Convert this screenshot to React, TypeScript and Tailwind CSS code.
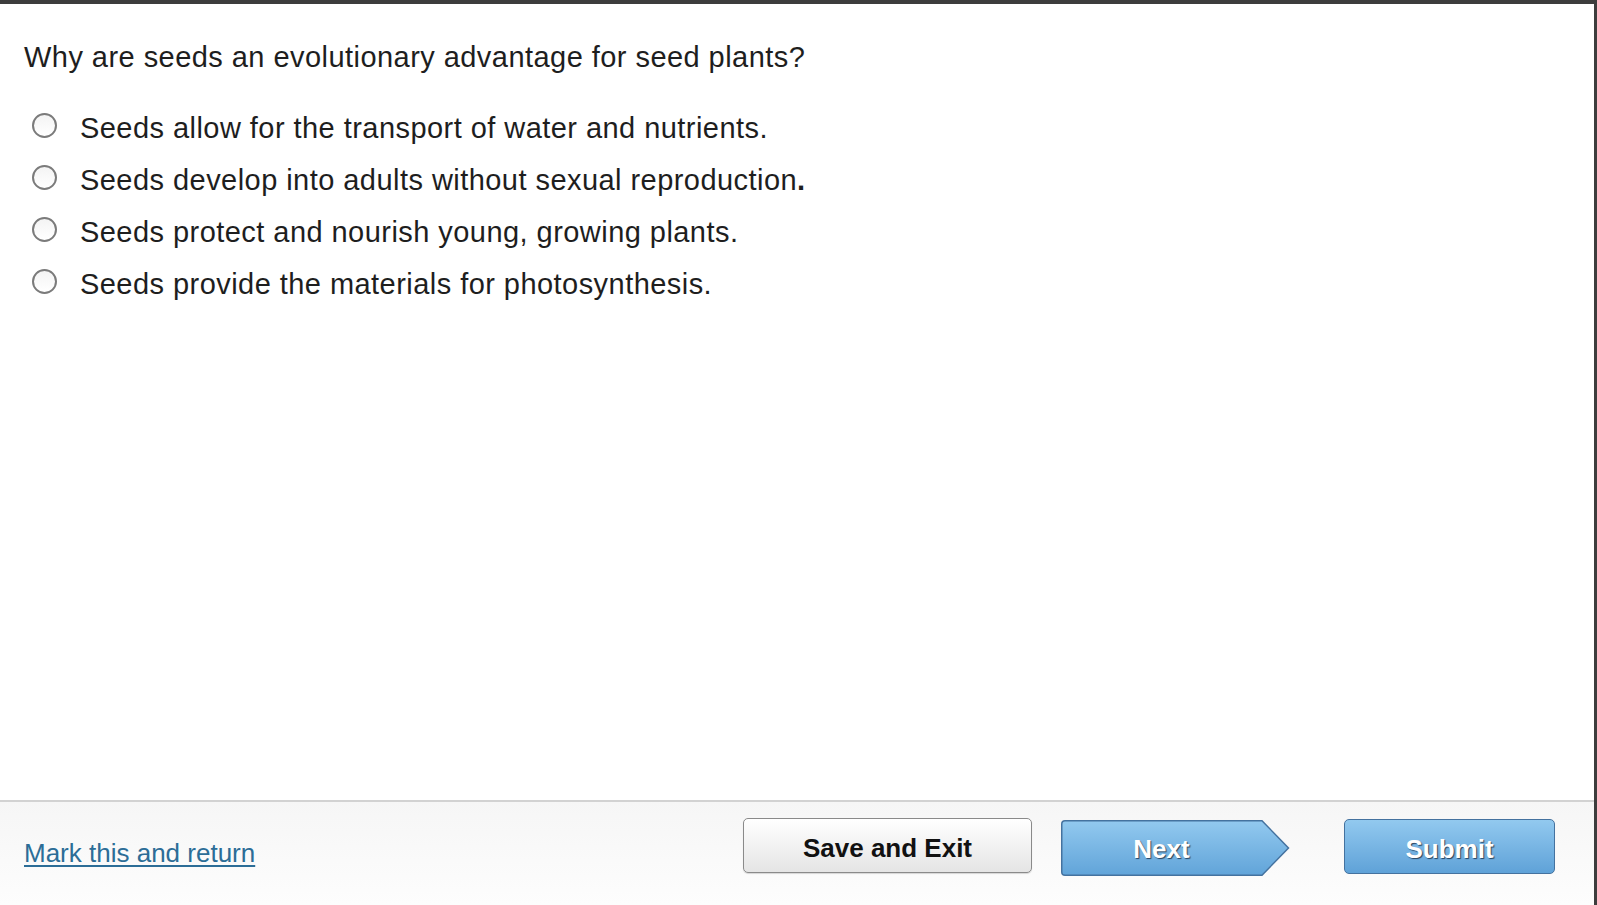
import React from "react";

const options = [
  <>Seeds allow for the transport of water and nutrients.</>,
  <>
    Seeds develop into adults without sexual reproduction<b>.</b>
  </>,
  <>Seeds protect and nourish young, growing plants.</>,
  <>Seeds provide the materials for photosynthesis.</>,
];

function Radio() {
  return (
    <span className="mt-[11px] block h-[25px] w-[25px] shrink-0 rounded-full border-2 border-[#7b7b7b] bg-gradient-to-b from-[#f4f4f4] to-white" />
  );
}

export default function App() {
  return (
    <div
      className="flex h-[905px] w-full flex-col border-t-4 border-r-[3px] border-[#3d3d3d] bg-white text-[#1e1e1e]"
      style={{ fontFamily: '"Liberation Sans", Arial, Helvetica, sans-serif' }}
    >
      <main className="flex-1 pl-6 pt-[37px]">
        <h1 className="text-[29px] font-normal leading-[32px] tracking-[0.45px]">
          Why are seeds an evolutionary advantage for seed plants?
        </h1>
        <div className="mt-[29px] flex flex-col">
          {options.map((o, i) => (
            <label key={i} className="ml-2 flex h-[52px] items-start">
              <Radio />
              <span className="ml-[23px] text-[29px] leading-[52px] tracking-[0.45px]">{o}</span>
            </label>
          ))}
        </div>
      </main>
      <footer className="flex h-[105px] shrink-0 items-start border-t-2 border-[#d2d2d2] bg-gradient-to-b from-[#f6f6f6] to-[#fdfdfd] pl-6 pr-[39px] pt-[16px]">
        <a
          href="#"
          className="mt-[20px] text-[26px] leading-[30px] text-[#2c6d97] underline decoration-[2px] underline-offset-[3px]"
        >
          Mark this and return
        </a>
        <div className="ml-auto flex items-start">
          <button className="h-[55px] w-[289px] rounded-[5px] border border-[#8a8a8a] bg-gradient-to-b from-white to-[#e5e5e5] pt-[6px] text-[26px] font-bold text-[#111] shadow-[0_1px_1px_rgba(0,0,0,0.15)]">
            Save and Exit
          </button>
          <button className="relative ml-[29px] mt-[2px] h-[56px] w-[229px] pt-[3px] text-[26px] font-bold text-white">
            <svg className="absolute inset-0" width="229" height="56" viewBox="0 0 229 56">
              <defs>
                <linearGradient id="ng" x1="0" y1="0" x2="0" y2="1">
                  <stop offset="0" stopColor="#92c9ef" />
                  <stop offset="1" stopColor="#61a4d9" />
                </linearGradient>
              </defs>
              <path
                d="M4 0.75 H201 L227.5 28 L201 55.25 H4 Q0.75 55.25 0.75 52 V4 Q0.75 0.75 4 0.75 Z"
                fill="url(#ng)"
                stroke="#44729f"
                strokeWidth="1.5"
              />
            </svg>
            <span className="relative block w-[201px] text-center [text-shadow:1px_1px_1px_#27425f]">Next</span>
          </button>
          <button className="ml-[54px] mt-[1px] h-[55px] w-[211px] rounded-[5px] border border-[#44729f] bg-gradient-to-b from-[#92c9ef] to-[#5fa2d8] pt-[6px] text-[26px] font-bold text-white [text-shadow:1px_1px_1px_#27425f]">
            Submit
          </button>
        </div>
      </footer>
    </div>
  );
}
